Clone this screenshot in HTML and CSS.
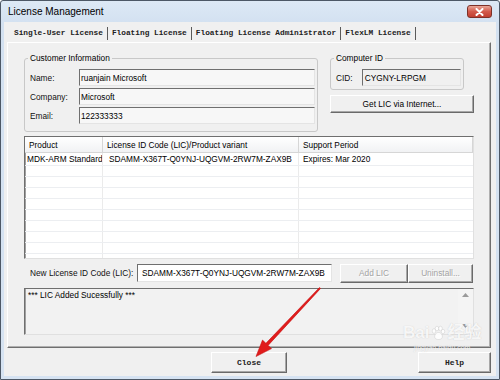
FILE: index.html
```html
<!DOCTYPE html>
<html>
<head>
<meta charset="utf-8">
<link rel="stylesheet" href="styles.css">
</head>
<body>
<div class="window">
  <div class="titlebar">
    <span class="title">License Management</span>
    <span class="close-x"><svg width="11" height="8" viewBox="0 0 11 8"><path d="M2.5 1 L8.5 7 M8.5 1 L2.5 7" stroke="#fff" stroke-width="2" stroke-linecap="round"/></svg></span>
  </div>
  <div class="client">
    <div class="tabs">
      <span class="tab active">Single-User License</span>
      <span class="tab">Floating License</span>
      <span class="tab">Floating License Administrator</span>
      <span class="tab">FlexLM License</span>
    </div>
    <div class="panel">
      <div class="top">
        <fieldset class="group customer">
          <legend>Customer Information</legend>
          <div class="field"><span class="lbl">Name:</span><span class="input">ruanjain Microsoft</span></div>
          <div class="field"><span class="lbl">Company:</span><span class="input">Microsoft</span></div>
          <div class="field"><span class="lbl">Email:</span><span class="input">122333333</span></div>
        </fieldset>
        <div class="right-col">
          <fieldset class="group computer">
            <legend>Computer ID</legend>
            <div class="field"><span class="lbl cid">CID:</span><span class="input ro">CYGNY-LRPGM</span></div>
          </fieldset>
          <div class="btn getlic">Get LIC via Internet...</div>
        </div>
      </div>
      <div class="listview">
        <div class="lv-head"><span>Product</span><span>License ID Code (LIC)/Product variant</span><span>Support Period</span></div>
        <div class="lv-row first"><span class="c1">MDK-ARM Standard</span><span class="c2">SDAMM-X367T-Q0YNJ-UQGVM-2RW7M-ZAX9B</span><span class="c3">Expires: Mar 2020</span></div>
        <div class="lv-row"><span></span><span></span><span></span></div>
        <div class="lv-row"><span></span><span></span><span></span></div>
        <div class="lv-row"><span></span><span></span><span></span></div>
        <div class="lv-row"><span></span><span></span><span></span></div>
        <div class="lv-row"><span></span><span></span><span></span></div>
        <div class="lv-row"><span></span><span></span><span></span></div>
        <div class="lv-row"><span></span><span></span><span></span></div>
        <div class="lv-row"><span></span><span></span><span></span></div>
        <div class="lv-fill"><span></span><span></span><span></span></div>
      </div>
      <div class="lic-row">
        <span class="lic-label">New License ID Code (LIC):</span>
        <span class="input lic-input">SDAMM-X367T-Q0YNJ-UQGVM-2RW7M-ZAX9B</span>
        <span class="btn disabled add">Add LIC</span>
        <span class="btn disabled uninstall">Uninstall...</span>
      </div>
      <div class="status">
        <div class="status-text">*** LIC Added Sucessfully ***</div>
        <div class="vscroll">
          <svg width="7" height="4" viewBox="0 0 7 4"><path d="M0 4 L3.5 0 L7 4 Z" fill="#9a9a9a"/></svg>
          <svg width="7" height="4" viewBox="0 0 7 4"><path d="M0 0 L3.5 4 L7 0 Z" fill="#9a9a9a"/></svg>
        </div>
      </div>
    </div>
    <div class="bottom">
      <span class="btn mono close">Close</span>
      <span class="btn mono help">Help</span>
    </div>
  </div>
  <div class="watermark">
    <span class="wm-big">Bai<svg class="paw" width="16" height="16" viewBox="0 0 16 16"><g fill="rgba(255,255,255,0.85)" stroke="rgba(150,150,150,0.35)" stroke-width="0.6"><ellipse cx="4" cy="6" rx="1.8" ry="2.3"/><ellipse cx="7" cy="3.5" rx="1.8" ry="2.3"/><ellipse cx="10.5" cy="3.5" rx="1.8" ry="2.3"/><ellipse cx="13" cy="6.5" rx="1.7" ry="2.2"/><path d="M8.5 7.5 C5.5 7.5 4 11 5 13 C6 15 11 15 12 13 C13 11 11.5 7.5 8.5 7.5 Z"/></g></svg>经验</span>
    <span class="wm-small">jingyan.baidu.com</span>
  </div>
  <svg class="arrow" width="500" height="380" viewBox="0 0 500 380">
    <polygon points="320.6,288.4 268.1,345.4 271.5,348.6 256,356.5 262.5,340.1 265.9,343.3 319.4,287.6" fill="#e01c1c" stroke="#c81414" stroke-width="0.6"/>
  </svg>
</div>
</body>
</html>
```
FILE: styles.css
```css
* { box-sizing: border-box; }
html, body { margin: 0; padding: 0; }
body {
  width: 500px;
  height: 380px;
  overflow: hidden;
  background: #ffffff;
  font-family: "Liberation Sans", Arial, sans-serif;
  font-size: 8.3px;
  color: #000;
}
.window {
  position: relative;
  width: 500px;
  height: 380px;
  border: 1px solid #4d5866;
  border-radius: 3px 3px 0 0;
  background: linear-gradient(#dde9f5, #d3e1f1 22px, #d6e3f2);
  display: flex;
  flex-direction: column;
}
.titlebar {
  height: 21px;
  display: flex;
  align-items: center;
  padding: 0 7px 0 7px;
}
.title { font-size: 10px; color: #000; }
.close-x {
  margin-left: auto;
  width: 25px;
  height: 13px;
  border: 1px solid #7d3128;
  border-radius: 3px;
  background: linear-gradient(#e9a899, #d35a4b 50%, #c13f31);
  display: flex;
  align-items: center;
  justify-content: center;
}
.client {
  margin: 0 3px 3px 3px;
  flex: 1;
  background: #f0f0f0;
  display: flex;
  flex-direction: column;
}
.tabs {
  display: flex;
  height: 18px;
  margin-top: 2px;
  padding-left: 6px;
  align-items: center;
}
.tab {
  font-family: "Liberation Mono", "Courier New", monospace;
  font-size: 7.8px;
  font-weight: bold;
  height: 13px;
  line-height: 13px;
  padding: 0 4px;
  border-right: 1px solid #5a5a5a;
  color: #222;
}
.panel {
  margin-left: 3px;
  width: 484px;
  height: 306px;
  border: 1px solid;
  border-color: #ffffff #6f6f6f #6f6f6f #ffffff;
  box-shadow: inset -1px -1px 0 #b0b0b0;
  padding: 10px 16px 12px 16px;
  display: flex;
  flex-direction: column;
}
.top {
  display: flex;
  gap: 12px;
  height: 79px;
}
fieldset.group {
  margin: 0;
  padding: 6px 2px 0 5px;
  border: 1px solid #c8c8c8;
  border-radius: 3px;
  min-width: 0;
}
legend {
  padding: 0 2px;
  margin-left: -2px;
  line-height: 10px;
  font-size: 8.3px;
}
.customer { width: 294px; height: 79px; }
.right-col {
  display: flex;
  flex-direction: column;
  width: 144px;
}
.computer { width: 134px; height: 37px; padding-top: 4px; }
.field {
  display: flex;
  align-items: center;
  height: 17px;
  margin-bottom: 2px;
}
.lbl { width: 49px; color: #111; }
.lbl.cid { width: 26px; }
.input {
  height: 17px;
  width: 236px;
  border: 1px solid;
  border-color: #6f6f6f #e4e4e4 #e4e4e4 #6f6f6f;
  background: #f7f7f7;
  padding-left: 1px;
  display: flex;
  align-items: center;
  white-space: nowrap;
  overflow: hidden;
}
.input.ro { width: 100px; background: #f0f0f0; padding-left: 2px; }
.btn {
  display: flex;
  align-items: center;
  justify-content: center;
  background: #f0f0f0;
  border: 1px solid;
  border-color: #ffffff #6a6a6a #6a6a6a #ffffff;
  box-shadow: inset -1px -1px 0 #a8a8a8;
  white-space: nowrap;
}
.getlic { margin-top: 5px; width: 144px; height: 18px; }
.listview {
  margin-top: 4px;
  height: 123px;
  border: 1px solid;
  border-color: #6f6f6f #e0e0e0 #e0e0e0 #6f6f6f;
  box-shadow: inset 1px 0 0 #a0a0a0;
  background: #fff;
  display: flex;
  flex-direction: column;
}
.lv-head, .lv-row, .lv-fill {
  display: grid;
  grid-template-columns: 78px 196px 1fr;
}
.lv-head {
  height: 16px;
  background: linear-gradient(#ffffff, #f1f2f4);
  border-bottom: 1px solid #d6d6d6;
}
.lv-head span {
  border-right: 1px solid #d6d6d6;
  padding-left: 4px;
  display: flex;
  align-items: center;
  white-space: nowrap;
  overflow: hidden;
}
.lv-row {
  height: 11px;
  border-bottom: 1px solid #eceef1;
}
.lv-row.first { height: 13px; }
.lv-row span, .lv-fill span {
  border-right: 1px solid #ebebeb;
  display: flex;
  align-items: center;
  white-space: nowrap;
  overflow: hidden;
}
.lv-row span:last-child, .lv-fill span:last-child { border-right: none; }
.lv-row .c1 { padding-left: 2px; }
.lv-row .c2 { padding-left: 6px; }
.lv-row .c3 { padding-left: 4px; }
.lv-fill { flex: 1; }
.lic-row {
  margin-top: 4px;
  height: 20px;
  display: flex;
  align-items: center;
}
.lic-label { width: 113px; padding-left: 6px; color: #111; }
.lic-input { width: 195px; height: 18px; background: #fff; padding-left: 4px; }
.btn.disabled { color: #a3a3a3; text-shadow: 1px 1px 0 #fff; height: 19px; }
.add { margin-left: 8px; width: 68px; }
.uninstall { width: 65px; }
.status {
  margin-top: 5px;
  height: 47px;
  border: 1px solid;
  border-color: #6f6f6f #e0e0e0 #e0e0e0 #6f6f6f;
  box-shadow: inset 1px 0 0 #a0a0a0;
  background: #f2f2f2;
  display: flex;
}
.status-text {
  flex: 1;
  padding: 1px 3px;
  line-height: 10px;
}
.vscroll {
  width: 15px;
  background: #f4f4f4;
  display: flex;
  flex-direction: column;
  justify-content: space-between;
  align-items: center;
  padding: 4px 0 6px 0;
}
.bottom {
  display: flex;
  margin-top: 4px;
  height: 21px;
  padding-right: 5px;
}
.mono {
  font-family: "Liberation Mono", "Courier New", monospace;
  font-size: 8px;
  font-weight: bold;
  color: #222;
}
.close { margin-left: 207px; width: 76px; height: 21px; }
.help { margin-left: auto; width: 73px; height: 21px; }
.watermark {
  position: absolute;
  left: 402px;
  top: 322px;
  display: flex;
  flex-direction: column;
  align-items: center;
  pointer-events: none;
  color: rgba(255, 255, 255, 0.85);
  text-shadow: 0 0 1px rgba(120, 120, 120, 0.35);
}
.wm-big {
  display: flex;
  align-items: center;
  font-family: "Liberation Sans", "Noto Sans CJK SC", sans-serif;
  font-size: 17px;
  font-weight: bold;
  line-height: 20px;
}
.paw { margin: 0 1px; }
.wm-small {
  font-family: "Liberation Sans", sans-serif;
  font-size: 7px;
  line-height: 9px;
}
.arrow {
  position: absolute;
  left: -1px;
  top: -1px;
  pointer-events: none;
}
```
